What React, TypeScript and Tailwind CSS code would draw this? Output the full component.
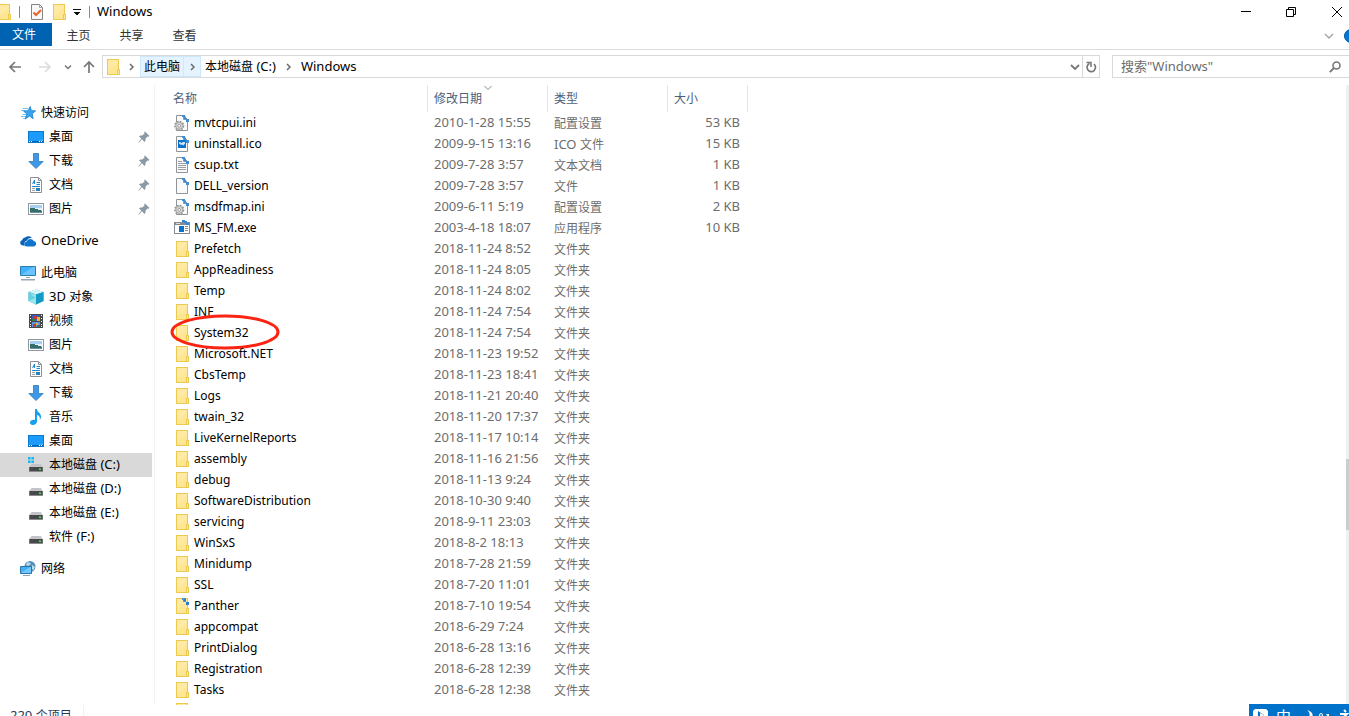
import type { ReactNode } from "react";

type IconProps = { className?: string };

type FileIcon = "ini" | "ico" | "txt" | "blank" | "exe" | "folder" | "folderPinned";

type Entry = {
  name: string;
  date: string;
  kind: string;
  size?: string;
  icon: FileIcon;
  circled?: boolean;
};

type NavItem = { label: string; icon: ReactNode; pinned?: boolean; selected?: boolean };

function Svg({ children, className = "h-4 w-4", box = "0 0 16 16", crisp = false }: IconProps & {
  children: ReactNode;
  box?: string;
  crisp?: boolean;
}) {
  return (
    <svg
      viewBox={box}
      fill="none"
      aria-hidden="true"
      shapeRendering={crisp ? "crispEdges" : undefined}
      className={`shrink-0 ${className}`}
    >
      {children}
    </svg>
  );
}

// Chinese runs are set one step smaller than Latin ones
function Label({ text }: { text: string }) {
  return (
    <>
      {text.split(/([\u4e00-\u9fff]+)/).map((part, i) =>
        i % 2 ? (
          <span key={i} className="text-[12px]">
            {part}
          </span>
        ) : (
          part
        ),
      )}
    </>
  );
}

/* ---------- file icons ---------- */

function FolderIcon({ pinned = false }: { pinned?: boolean }) {
  return (
    <Svg crisp>
      <path d="M2 0h12v10h1v6H2z" fill="#ecc94f" />
      <path d="M3 1h10v14H3z" fill="#ffe693" />
      <path d="M3 1h10v3L3 12z" fill="#ffeaa5" />
      <path d="M12 10h3v6h-3z" fill="#ecc94f" />
      <path d="M13 11h1v4h-1z" fill="#ffe693" />
      {pinned && <PinMark />}
    </Svg>
  );
}

function PinMark() {
  return (
    <>
      <path d="M8 0h4v4h-3V2H8z" fill="#4a94d8" />
      <path d="M10 1h2v2h-2zM12 4h3v3h-3z" fill="#2a7dcd" />
    </>
  );
}

function PageShape() {
  return (
    <>
      <path d="M2.5 .5h7l4 4v11h-11z" fill="#fafafa" stroke="#8f9499" />
      <path d="M9.5 .5v4h4" stroke="#a7acb1" />
    </>
  );
}

function Gear() {
  return (
    <>
      <circle cx="5.2" cy="10.8" r="4.3" fill="#e6e6e6" stroke="#8f8f8f" strokeWidth="1.6" strokeDasharray="1.7 1.2" />
      <circle cx="5.2" cy="10.8" r="3.4" fill="#dcdcdc" stroke="#9b9b9b" strokeWidth=".8" />
      <circle cx="5.2" cy="10.8" r="1.4" fill="#fff" stroke="#8c8c8c" strokeWidth=".8" />
    </>
  );
}

function EntryIcon({ icon }: { icon: FileIcon }) {
  if (icon === "folder" || icon === "folderPinned") {
    return <FolderIcon pinned={icon === "folderPinned"} />;
  }
  if (icon === "exe") {
    return (
      <Svg crisp>
        <path d="M0 2h16v12H0z" fill="#858b91" />
        <path d="M1 5h14v8H1z" fill="#fff" />
        <path d="M5 6h5v6H5z" fill="#0b72d0" />
        <path d="M11 6h3v1h-3zM11 8h3v1h-3zM11 10h3v1h-3z" fill="#8d8d8d" />
        <path d="M2 3h4v1H2z" fill="#d9dde0" />
        <path d="M8 0h3v2H8zM10 1h3v2h-3zM12 3h3v2h-3z" fill="#2f86d4" />
      </Svg>
    );
  }
  return (
    <Svg>
      <PageShape />
      {icon === "ini" && <Gear />}
      {icon === "ico" && (
        <>
          <path d="M4 4h8v8H4z" fill="#0c70cd" />
          <path d="M5 6h1l1.500 1L9 6h2v1.500L9.500 9.500 8 8.500 7 9 5 7.500z" fill="#cfe7fb" />
        </>
      )}
      {icon === "txt" && (
        <path d="M4 4.500h4M4 6.500h8M4 8.500h8M4 10.500h8M4 12.500h8" stroke="#9a9fa4" />
      )}
      <path d="M8 0h3v1.500h1V4h3v3h-3V4.500H9.500V2H8z" fill="#3f8dd5" />
    </Svg>
  );
}

/* ---------- navigation icons ---------- */

function StarIcon() {
  return (
    <Svg>
      <path d="M2.500 3.500h6M1 5.500h4M2.500 9.500h4M1 11.500h5M3 13.500h3" stroke="#7cc4f0" />
      <path d="M10.200 1.500l1.200 4.200 4.300.1-3.500 2.900 1 5-3.700-2.700-4.200 3 1.500-5L3.500 6l4.700-.3z" fill="#35a5ee" stroke="#1b7fcb" strokeWidth=".8" />
    </Svg>
  );
}

function DesktopIcon() {
  return (
    <Svg crisp>
      <path d="M0 2h16v12H0z" fill="#0f78c8" />
      <path d="M1 3h14v10H1z" fill="#1b9bfb" />
      <path d="M15 3v7L6 13h3l6-1z" fill="#49b2ff" />
      <path d="M1 12h14v1H1z" fill="#0b62ae" />
      <path d="M1 12h1v1H1zM3 12h1v1H3zM11 12h1v1h-1zM13 12h1v1h-1z" fill="#fff" />
    </Svg>
  );
}

function DownloadIcon() {
  return (
    <Svg>
      <path d="M5.500.5h5v8h4.700L8 15.500.8 8.500h4.700z" fill="#3d98e8" stroke="#3277b8" strokeWidth=".8" />
    </Svg>
  );
}

function DocumentIcon() {
  return (
    <Svg>
      <path d="M2.500 .5h8l3 3v12h-11z" fill="#fff" stroke="#8b9095" />
      <path d="M10.500 .5v3h3" stroke="#8b9095" />
      <path d="M6.500 3L4.500 7M6.500 3v4M5 5.500h2M8.500 5.500H12M8.500 7.500H12M4 9.500h8" stroke="#2387cf" />
      <path d="M4 11.500h3M4 13.500h3" stroke="#9ea3a8" />
      <path d="M8 11h4v3H8z" fill="#2b7fba" />
    </Svg>
  );
}

function PictureIcon() {
  return (
    <Svg crisp>
      <path d="M0 2h16v12H0z" fill="#92979b" />
      <path d="M1 3h14v10H1z" fill="#fff" />
      <path d="M2 4h12v8H2z" fill="#a8d0f5" />
      <path d="M2 7h3l9 3v1H2z" fill="#356d67" />
      <path d="M6 7h8v2l-3 0z" fill="#dff0fb" />
      <path d="M2 11h12v1H2z" fill="#648fa9" />
    </Svg>
  );
}

function CloudIcon() {
  return (
    <Svg>
      <path d="M1.800 12.200A2.600 2.600 0 0 1 2 7.300 4 4 0 0 1 5.500 4.200 4.600 4.600 0 0 1 12 5C9 4.500 7.500 6 7 7.600 4.500 8 3.700 10.500 4.800 12.800z" fill="#0a62b5" />
      <path d="M7 13.500a2.500 2.500 0 0 1-.3-5 3.800 3.800 0 0 1 7-.5 2.800 2.800 0 0 1 .3 5.500z" fill="#0f74cf" />
    </Svg>
  );
}

function ComputerIcon() {
  return (
    <Svg>
      <path d="M.5 1.500h15v9H.5z" fill="#3fb0fb" stroke="#2d7cae" />
      <path d="M1 10L13 2h2v8z" fill="#6ac4ff" />
      <path d="M6 12h4v1H6z" fill="#8ca5b7" />
      <path d="M1 14h14v1.500H1z" fill="#95a5b4" />
    </Svg>
  );
}

function CubeIcon() {
  return (
    <Svg>
      <path d="M8 .5L15.500 3v9L8 15.500.5 12V3z" fill="#3cbcd8" />
      <path d="M8 .5L15.500 3 8 5.500.5 3z" fill="#d7f5f8" />
      <path d="M.5 3L8 5.500v10L.5 12z" fill="#67d0dd" />
      <path d="M15.500 3L8 5.500v10l7.500-3.500z" fill="#139bc6" />
      <path d="M.5 12L8 8.500v7zM2 5l6 4V5.500z" fill="#98e5ea" />
    </Svg>
  );
}

function VideoIcon() {
  return (
    <Svg crisp>
      <path d="M1 1h14v14H1z" fill="#46484b" />
      <path d="M4 2h8v6H4z" fill="#355dca" />
      <path d="M4 9h8v5H4z" fill="#6293dc" />
      <path d="M6 3h3v3H6zM5 11h3v3H5z" fill="#c83b2c" />
      <path d="M9 4h3v4H9zM8 10h2v2H8z" fill="#e5b83c" />
      <path d="M4 6h4v2H4zM9 12h3v2H9z" fill="#3a7a47" />
      <path d="M2 2h1v1H2zM2 5h1v1H2zM2 8h1v1H2zM2 11h1v1H2zM2 13h1v1H2zM13 2h1v1h-1zM13 5h1v1h-1zM13 8h1v1h-1zM13 11h1v1h-1zM13 13h1v1h-1z" fill="#fff" />
    </Svg>
  );
}

function MusicIcon() {
  return (
    <Svg>
      <path d="M7 0h1.800c.4 3.500 4.400 4 4.200 7.700 0 1.300-.6 2.300-1.300 3 .7-3-1-4.500-2.700-4.800v6.500c-.2 2.300-2.200 3.600-4.400 3.500-1.700-.1-2.700-1.200-2.600-2.400C2.200 11.500 4.500 10.400 7 11z" fill="#169ff0" />
    </Svg>
  );
}

function DriveIcon({ system = false }: { system?: boolean }) {
  return (
    <Svg>
      {system && (
        <path d="M0 0h2.600v2.600H0zM3.400 0H6v2.600H3.400zM0 3.400h2.600V6H0zM3.400 3.400H6V6H3.400z" fill="#14b8f5" />
      )}
      <path d="M3.500 7h9.500l1.500 3h-13z" fill="#c3c6c8" />
      <path d="M1.200 10h13.600v4.500H1.200z" fill="#47494b" />
      <path d="M1.200 14h13.600v1H1.200z" fill="#8a8c8e" />
      <path d="M11 11.500h2v1.500h-2z" fill="#51e05b" />
    </Svg>
  );
}

function NetworkIcon() {
  return (
    <Svg>
      <circle cx="10" cy="5.500" r="5.500" fill="#5990bb" />
      <path d="M7 1.500c2-.8 4 .2 3.500 2L8 5 6 4zM12 4l3 2-1.500 3-2-1z" fill="#b7dbe8" />
      <path d="M.5 5.500h11v7H.5z" fill="#42b0f8" stroke="#2874a8" />
      <path d="M1 12l9-6h1v6z" fill="#74c8ff" />
      <path d="M3 14.500h7" stroke="#8fa5b3" />
    </Svg>
  );
}

function PinIcon() {
  return (
    <Svg className="h-3 w-3" box="0 0 12 12">
      <path d="M7 .5L11.500 5l-1 .8-1-.3-2 2.200v2L6.500 11 4 8.300.8 11.700.3 11.200 3.500 7.700 1 5.500l1.200-1h2L6.500 2.500 6.200 1.300z" fill="#8b99a5" />
    </Svg>
  );
}

/* ---------- data ---------- */

const navGroups: { head: NavItem; items: NavItem[] }[] = [
  {
    head: { label: "快速访问", icon: <StarIcon /> },
    items: [
      { label: "桌面", icon: <DesktopIcon />, pinned: true },
      { label: "下载", icon: <DownloadIcon />, pinned: true },
      { label: "文档", icon: <DocumentIcon />, pinned: true },
      { label: "图片", icon: <PictureIcon />, pinned: true },
    ],
  },
  { head: { label: "OneDrive", icon: <CloudIcon /> }, items: [] },
  {
    head: { label: "此电脑", icon: <ComputerIcon /> },
    items: [
      { label: "3D 对象", icon: <CubeIcon /> },
      { label: "视频", icon: <VideoIcon /> },
      { label: "图片", icon: <PictureIcon /> },
      { label: "文档", icon: <DocumentIcon /> },
      { label: "下载", icon: <DownloadIcon /> },
      { label: "音乐", icon: <MusicIcon /> },
      { label: "桌面", icon: <DesktopIcon /> },
      { label: "本地磁盘 (C:)", icon: <DriveIcon system />, selected: true },
      { label: "本地磁盘 (D:)", icon: <DriveIcon /> },
      { label: "本地磁盘 (E:)", icon: <DriveIcon /> },
      { label: "软件 (F:)", icon: <DriveIcon /> },
    ],
  },
  { head: { label: "网络", icon: <NetworkIcon /> }, items: [] },
];

const folder = (name: string, date: string): Entry => ({ name, date, kind: "文件夹", icon: "folder" });

const entries: Entry[] = [
  { name: "mvtcpui.ini", date: "2010-1-28 15:55", kind: "配置设置", size: "53 KB", icon: "ini" },
  { name: "uninstall.ico", date: "2009-9-15 13:16", kind: "ICO 文件", size: "15 KB", icon: "ico" },
  { name: "csup.txt", date: "2009-7-28 3:57", kind: "文本文档", size: "1 KB", icon: "txt" },
  { name: "DELL_version", date: "2009-7-28 3:57", kind: "文件", size: "1 KB", icon: "blank" },
  { name: "msdfmap.ini", date: "2009-6-11 5:19", kind: "配置设置", size: "2 KB", icon: "ini" },
  { name: "MS_FM.exe", date: "2003-4-18 18:07", kind: "应用程序", size: "10 KB", icon: "exe" },
  folder("Prefetch", "2018-11-24 8:52"),
  folder("AppReadiness", "2018-11-24 8:05"),
  folder("Temp", "2018-11-24 8:02"),
  folder("INF", "2018-11-24 7:54"),
  { ...folder("System32", "2018-11-24 7:54"), circled: true },
  folder("Microsoft.NET", "2018-11-23 19:52"),
  folder("CbsTemp", "2018-11-23 18:41"),
  folder("Logs", "2018-11-21 20:40"),
  folder("twain_32", "2018-11-20 17:37"),
  folder("LiveKernelReports", "2018-11-17 10:14"),
  folder("assembly", "2018-11-16 21:56"),
  folder("debug", "2018-11-13 9:24"),
  folder("SoftwareDistribution", "2018-10-30 9:40"),
  folder("servicing", "2018-9-11 23:03"),
  folder("WinSxS", "2018-8-2 18:13"),
  folder("Minidump", "2018-7-28 21:59"),
  folder("SSL", "2018-7-20 11:01"),
  { ...folder("Panther", "2018-7-10 19:54"), icon: "folderPinned" },
  folder("appcompat", "2018-6-29 7:24"),
  folder("PrintDialog", "2018-6-28 13:16"),
  folder("Registration", "2018-6-28 12:39"),
  folder("Tasks", "2018-6-28 12:38"),
];

/* ---------- window parts ---------- */

function TitleBar() {
  return (
    <header className="flex h-[23px] shrink-0 items-center">
      <div className="-ml-1 flex items-center">
        <FolderIcon />
        <span className="ml-[7px] h-3 w-px bg-[#8a8a8a]" />
        <button aria-label="属性" className="ml-[9px]">
          <Svg>
            <path d="M2.500 .5h8l3 3v12h-11z" fill="#f8f8f8" stroke="#858585" />
            <path d="M10.500 .5v3h3" stroke="#a5a5a5" />
            <path d="M4.500 8.500l2.500 2.500 5-5" stroke="#e8632b" strokeWidth="2" />
          </Svg>
        </button>
        <button aria-label="新建文件夹" className="ml-[6px]">
          <FolderIcon />
        </button>
        <button aria-label="自定义快速访问工具栏" className="ml-[6px] pt-[2px]">
          <Svg className="h-2 w-2" box="0 0 8 8" crisp>
            <path d="M0 0h8v1H0z" fill="#111" />
            <path d="M1 3h6v1H6v1H5v1H3V5H2V4H1z" fill="#111" />
          </Svg>
        </button>
        <span className="ml-[8px] h-3 w-px bg-[#8a8a8a]" />
      </div>
      <h1 className="ml-[7px] text-[13px]">Windows</h1>
      <div className="ml-auto flex h-full text-black">
        <button aria-label="最小化" className="flex w-[45px] items-center justify-center">
          <Svg className="h-[10px] w-[10px]" box="0 0 10 10" crisp>
            <path d="M0 4h10v1H0z" fill="currentColor" />
          </Svg>
        </button>
        <button aria-label="还原" className="flex w-[45px] items-center justify-center">
          <Svg className="h-[10px] w-[10px]" box="0 0 10 10">
            <path d="M.5 2.500h7v7h-7zM2.500 2.500v-2h7v7h-2" stroke="currentColor" />
          </Svg>
        </button>
        <button aria-label="关闭" className="flex w-[36px] items-center justify-end pr-[7px]">
          <Svg className="h-[10px] w-[10px]" box="0 0 10 10">
            <path d="M0 0l10 10M10 0L0 10" stroke="currentColor" />
          </Svg>
        </button>
      </div>
    </header>
  );
}

function Ribbon() {
  return (
    <div className="flex h-[27px] shrink-0 items-start overflow-hidden border-b border-[#dadbdc] text-[12px] text-[#333]">
      <button className="h-[23px] w-[52px] bg-[#0063b1] pr-1 text-white">文件</button>
      {["主页", "共享", "查看"].map((tab) => (
        <button key={tab} className="h-[25px] w-[53px]">
          {tab}
        </button>
      ))}
      <button aria-label="展开功能区" className="ml-auto flex h-[26px] items-center">
        <Svg className="h-[10px] w-[10px]" box="0 0 10 10">
          <path d="M1 3l4 4 4-4" stroke="#a3a3a3" strokeWidth="1.300" />
        </Svg>
      </button>
      <button aria-label="帮助" className="-mr-[9px] ml-[10px] mt-[6px] h-[14px] w-[14px] rounded-full border border-[#005a9e] bg-[#0078d7]" />
    </div>
  );
}

function Arrow({ d, color = "#777" }: { d: string; color?: string }) {
  return (
    <Svg className="h-[14px] w-[14px]" box="0 0 14 14">
      <path d={d} stroke={color} strokeWidth="1.700" />
    </Svg>
  );
}

function Crumb({ className = "h-2 w-[7px]" }: IconProps) {
  return (
    <Svg className={className} box="0 0 7 8">
      <path d="M2 1l3 3-3 3" stroke="#6d6d6d" strokeWidth="1.500" />
    </Svg>
  );
}

function AddressRow() {
  return (
    <div className="mt-[5px] flex h-[23px] shrink-0 items-stretch pl-2 text-[13px]">
      <div className="flex w-[94px] items-center">
        <button aria-label="后退">
          <Arrow d="M13 7H2M7 2L2 7l5 5" />
        </button>
        <button aria-label="前进" className="ml-4">
          <Arrow d="M1 7h11M7 2l5 5-5 5" color="#dcdcdc" />
        </button>
        <button aria-label="最近位置" className="ml-[12px]">
          <Svg className="h-2 w-2" box="0 0 8 8">
            <path d="M1 2.500l3 3 3-3" stroke="#777" strokeWidth="1.500" />
          </Svg>
        </button>
        <button aria-label="向上" className="ml-[10px]">
          <Arrow d="M7 13V2M2 7l5-5 5 5" />
        </button>
      </div>
      <nav aria-label="地址" className="flex min-w-0 flex-1 items-center border border-[#d9d9d9] pl-[2px]">
        <FolderIcon />
        <Crumb className="ml-[7px] h-2 w-[7px]" />
        <button className="ml-[5px] h-full border border-[#cce8ff] bg-[#e5f3ff] px-[3px] text-[12px]">此电脑</button>
        <span className="flex h-full w-[17px] items-center justify-center border-y border-r border-[#cce8ff] bg-[#e5f3ff]">
          <Crumb />
        </span>
        <button className="ml-1">
          <Label text="本地磁盘 (C:)" />
        </button>
        <Crumb className="ml-[9px] h-2 w-[7px]" />
        <button className="ml-[9px]">Windows</button>
        <button aria-label="以前的位置" className="ml-auto flex h-full w-[14px] items-center justify-center">
          <Svg className="h-[10px] w-[10px]" box="0 0 10 10">
            <path d="M1 3l4 4 4-4" stroke="#777" strokeWidth="1.800" />
          </Svg>
        </button>
        <button aria-label="刷新" className="flex h-full w-[17px] items-center justify-center border-l border-[#d9d9d9]">
          <Svg className="h-3 w-3" box="0 0 12 12">
            <path d="M4.500 2.600A4.200 4.200 0 1 0 9 3.200" stroke="#777" strokeWidth="1.700" />
            <path d="M1.500 1.500H6V6" stroke="#777" strokeWidth="1.500" />
          </Svg>
        </button>
      </nav>
      <div className="ml-3 flex w-[237px] items-center border-y border-l border-[#d9d9d9] pl-2 pr-2">
        <input
          type="search"
          aria-label="搜索"
          placeholder={'搜索"Windows"'}
          className="min-w-0 flex-1 text-[13px] outline-none placeholder:text-[#6d6d6d]"
        />
        <Svg className="h-3 w-3" box="0 0 12 12">
          <circle cx="7.500" cy="4.500" r="3.500" stroke="#777" strokeWidth="1.600" />
          <path d="M5 7L.8 11.200" stroke="#777" strokeWidth="1.800" />
        </Svg>
      </div>
    </div>
  );
}

function NavRow({ item, nested = false }: { item: NavItem; nested?: boolean }) {
  return (
    <a
      href="#"
      className={`flex h-6 items-center gap-[5px] pr-[2px] ${nested ? "pl-7" : "pl-5"} ${item.selected ? "bg-[#d9d9d9]" : ""}`}
    >
      {item.icon}
      <span className="flex-1 whitespace-nowrap">
        <Label text={item.label} />
      </span>
      {item.pinned && <PinIcon />}
    </a>
  );
}

function Sidebar() {
  return (
    <nav aria-label="导航窗格" className="flex w-[155px] shrink-0 flex-col gap-2 border-r border-[#f3f3f3] pr-[2px] pt-4 text-[13px]">
      {navGroups.map(({ head, items }) => (
        <div key={head.label}>
          <NavRow item={head} />
          {items.map((item) => (
            <NavRow key={item.label} item={item} nested />
          ))}
        </div>
      ))}
    </nav>
  );
}

function FileTable() {
  return (
    <table className="w-[593px] table-fixed border-separate border-spacing-0 self-start text-[13px] text-[#6d6d6d]">
      <colgroup>
        <col />
        <col className="w-[120px]" />
        <col className="w-[120px]" />
        <col className="w-[80px]" />
      </colgroup>
      <thead>
        <tr className="h-[27px] text-left text-[12px] text-[#4c607a]">
          <th className="border-r border-[#e5e5e5] p-0 pl-[18px] font-normal">名称</th>
          <th className="relative border-r border-[#e5e5e5] p-0 pl-[6px] font-normal" aria-sort="descending">
            修改日期
            <Svg className="absolute left-14 top-0 h-[6px] w-2" box="0 0 8 6">
              <path d="M.5 1L4 4.500 7.500 1" stroke="#8a8a8a" />
            </Svg>
          </th>
          <th className="border-r border-[#e5e5e5] p-0 pl-[6px] font-normal">类型</th>
          <th className="border-r border-[#e5e5e5] p-0 pl-[6px] font-normal">大小</th>
        </tr>
      </thead>
      <tbody>
        {entries.map((entry) => (
          <tr key={entry.name} className="h-[21px] align-top leading-5">
            <td className="p-0 pl-[19px] text-[12px] leading-[21px] text-black">
              <div className="relative flex items-center gap-1">
                <EntryIcon icon={entry.icon} />
                {entry.name}
                {/* hand-drawn marker around the folder */}
                {entry.circled && (
                  <Svg className="absolute -left-1 -top-2 h-9 w-[110px]" box="0 0 110 36">
                    <ellipse cx="55" cy="18" rx="53" ry="16" stroke="#fb2412" strokeWidth="3" />
                  </Svg>
                )}
              </div>
            </td>
            <td className="whitespace-nowrap p-0 pl-[6px]">{entry.date}</td>
            <td className="p-0 pl-[6px] pt-[2px] leading-[18px]">
              <Label text={entry.kind} />
            </td>
            <td className="p-0 pr-2 text-right">{entry.size}</td>
          </tr>
        ))}
        <tr className="h-[21px]">
          <td className="p-0 pl-[19px]" colSpan={4}>
            <FolderIcon />
          </td>
        </tr>
      </tbody>
    </table>
  );
}

function ImeBar() {
  return (
    <div className="absolute bottom-0 right-0 flex h-3 w-[100px] items-start overflow-hidden bg-[#0072c9] text-white">
      <Svg className="ml-1 mt-1 h-4 w-4" box="0 0 16 16">
        <path d="M2 1h11l2 2v12H0V3z" fill="#fff" />
        <path d="M5 3v9l6-5z" fill="#0072c9" />
        <path d="M7 5v5l4-3z" fill="#fff" />
      </Svg>
      <span className="ml-[7px] mt-1 text-[15px] leading-4">中</span>
      <Svg className="ml-[10px] mt-1 h-4 w-4" box="0 0 16 16">
        <path d="M6 2c3 2 4 6 0 10 7-1 8-8 0-10z" fill="#fff" />
      </Svg>
      <Svg className="mt-1 h-4 w-4" box="0 0 16 16">
        <circle cx="4" cy="7" r="1.500" stroke="#fff" />
        <path d="M9 6h3v3h-1z" fill="#fff" />
      </Svg>
      <Svg className="ml-1 mt-1 h-4 w-4" box="0 0 16 16">
        <path d="M7 2l2 2M3 6h7L3 12" stroke="#fff" strokeWidth="2" />
      </Svg>
    </div>
  );
}

export default function App() {
  return (
    <div className="relative flex h-screen flex-col overflow-hidden bg-white font-['Noto_Sans','Noto_Sans_CJK_SC',sans-serif] text-black">
      <TitleBar />
      <Ribbon />
      <AddressRow />
      <main className="mt-[7px] flex min-h-0 flex-1 overflow-hidden">
        <Sidebar />
        <FileTable />
        <div className="ml-auto flex w-[3px] flex-col bg-[#f0f0f0]">
          <div className="mt-[374px] h-[71px] bg-[#cdcdcd]" />
        </div>
      </main>
      <footer className="flex h-[11px] shrink-0 items-start overflow-hidden pl-[10px] text-[13px] leading-5 text-[#1e395b]">
        <span>
          <Label text="220 个项目" />
        </span>
        <span className="ml-[11px] h-full w-px bg-[#f0f0f0]" />
      </footer>
      <ImeBar />
    </div>
  );
}
